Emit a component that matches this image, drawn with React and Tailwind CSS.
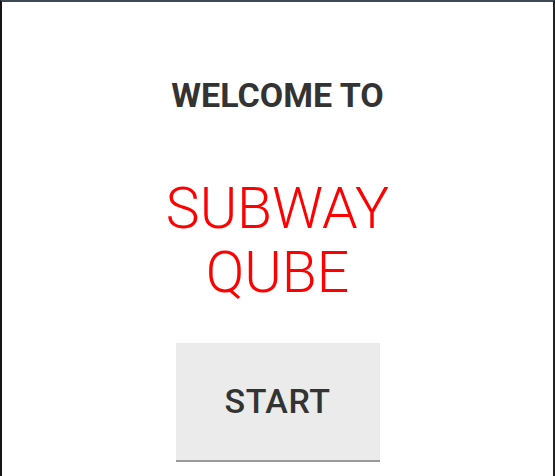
export default function App() {
  return (
    <div className="w-[555px] h-[476px] bg-white border-l-2 border-r-2 border-t-2 border-l-[#151515] border-r-[#222222] border-t-[#3d4756] overflow-hidden font-['Roboto',sans-serif]">
      <div className="flex flex-col items-center pt-[73px]">
        <h1 className="text-[34px] leading-[40px] font-bold text-[#333333]">WELCOME TO</h1>
        <p className="mt-[62px] text-[57px] leading-[64px] font-light text-[#ff0000] text-center">
          SUBWAY
          <br />
          QUBE
        </p>
        <button className="mt-[38px] w-[204px] h-[119px] bg-[#ebebeb] border-b-2 border-[#9a9a9a] text-[#333333] text-[34px] font-medium tracking-[0.5px]">
          START
        </button>
      </div>
    </div>
  )
}
